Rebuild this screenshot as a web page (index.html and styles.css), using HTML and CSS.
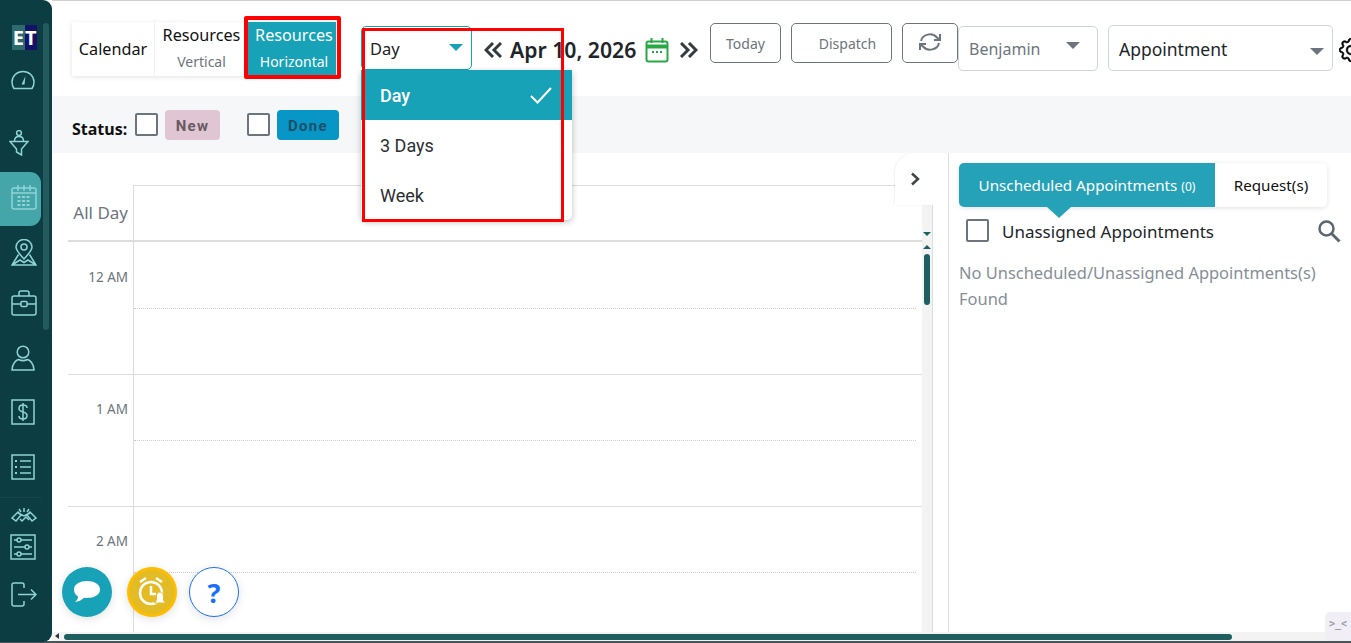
FILE: index.html
```html
<!DOCTYPE html>
<html lang="en">
<head>
<meta charset="utf-8">
<title>Calendar</title>
<link rel="stylesheet" href="styles.css">
</head>
<body>
<div class="app">
  <aside class="sidebar">
    <div class="logo"><span class="logo-e">E</span><span class="logo-t">T</span></div>
    <a class="nav n-gauge"><svg width="24" height="20" viewBox="0 0 24 20"><path d="M3 18.500h18c1.500-2 2-4 2-6.500C23 6 18 1.500 12 1.500S1 6 1 12c0 2.500.5 4.500 2 6.500z"/><path class="fill" d="M14.500 6l-1 8.500h-3z"/></svg></a>
    <a class="nav n-funnel"><svg width="20" height="26" viewBox="0 0 20 26"><circle cx="10" cy="3" r="2.400"/><path d="M5.500 11c0-3 2-4.500 4.500-4.500s4.500 1.500 4.500 4.500M1 11.500h18l-6.500 7.500v6l-5-3v-3z"/></svg></a>
    <a class="nav n-cal active"><svg width="26" height="26" viewBox="0 0 26 26"><rect x="1" y="4" width="24" height="21" rx="2"/><path d="M1 9h24M7 1v6M13 1v6M19 1v6"/><path class="dash" d="M6.500 13h13M6.500 17h13M6.500 21h13"/></svg></a>
    <a class="nav n-pin"><svg width="26" height="27" viewBox="0 0 26 27"><path d="M13 20C9 15.500 5 11.500 5 8a8 7.500 0 0 1 16 0c0 3.500-4 7.500-8 12z"/><circle cx="13" cy="8" r="3"/><path d="M7.500 15.500L1 26h24l-6.500-10.500M1 26l8-5 4 2.500 4-2.500 8 5"/></svg></a>
    <a class="nav n-case"><svg width="26" height="26" viewBox="0 0 26 26"><rect x="1" y="6" width="24" height="19" rx="2"/><path d="M8 6V3c0-1 1-2 2-2h6c1 0 2 1 2 2v3M1 14h9M16 14h9"/><rect x="10" y="11.500" width="6" height="5" rx="1"/></svg></a>
    <a class="nav n-person"><svg width="24" height="26" viewBox="0 0 24 26"><circle cx="12" cy="7" r="5.800"/><path d="M1 25c0-6 4-10 6.500-10.500 3 1.500 6 1.500 9 0C19 15 23 19 23 25z"/></svg></a>
    <a class="nav n-dollar"><svg width="24" height="26" viewBox="0 0 24 26"><rect x="1" y="1" width="22" height="24"/><path d="M16 9c0-2-2-3-4-3S8 7 8 9.500s2 3 4 3.500 4 1 4 3.500S14 20 12 20s-4-1-4-3M12 4v18"/></svg></a>
    <a class="nav n-list"><svg width="24" height="26" viewBox="0 0 24 26"><rect x="1" y="1" width="22" height="24"/><path d="M9 7h11M9 13h11M9 19h11"/><path class="dash" d="M4 7h2M4 13h2M4 19h2"/></svg></a>
    <a class="nav n-shake"><svg width="26" height="16" viewBox="0 0 26 16"><path d="M13 1v4M8 2l2 3M18 2l-2 3M1 11l6-6 3 3-5 6zM25 11l-6-6-3 3 5 6zM7 6l6 3 6-3M9 12l2 2 4-4 3 3"/></svg></a>
    <a class="nav n-slide"><svg width="26" height="26" viewBox="0 0 26 26"><rect x="1" y="1" width="24" height="24"/><path d="M4 6h3M11 6h11M4 13h11M19 13h3M4 20h3M11 20h11"/><circle cx="9" cy="6" r="2"/><circle cx="17" cy="13" r="2"/><circle cx="9" cy="20" r="2"/></svg></a>
    <a class="nav n-out"><svg width="26" height="25" viewBox="0 0 26 25"><path d="M13 6V3c0-1-1-2-2-2H3C2 1 1 2 1 3v19c0 1 1 2 2 2h8c1 0 2-1 2-2v-3M7 12.500h18M20 7.500l5 5-5 5"/></svg></a>
    <div class="side-scroll"></div>
  </aside>

  <main class="main">
    <header class="toolbar">
      <div class="view-tabs">
        <div class="vtab vtab-cal">Calendar</div>
        <div class="vtab vtab-v">Resources<small>Vertical</small></div>
        <div class="vtab vtab-h">Resources<small>Horizontal</small></div>
      </div>
      <div class="select-day">Day<i class="caret teal"></i></div>
      <div class="date-nav">
        <svg class="dbl" width="18" height="16" viewBox="0 0 18 16"><path d="M9 1L2 8l7 7M17 1l-7 7 7 7"/></svg>
        <span class="date-text">Apr 10, 2026</span>
        <svg class="cal-green" width="24" height="26" viewBox="0 0 24 26"><rect x="1.500" y="4.500" width="21" height="20" rx="2"/><path d="M1.500 9.500h21" stroke-width="4"/><path d="M6.500 1v5M17.500 1v5"/><path d="M7 15h2M11 15h2M15 15h2" stroke-width="2"/></svg>
        <svg class="dbl" width="18" height="16" viewBox="0 0 18 16"><path d="M1 1l7 7-7 7M9 1l7 7-7 7"/></svg>
      </div>
      <button class="btn btn-today">Today</button>
      <button class="btn btn-dispatch">Dispatch</button>
      <button class="btn btn-refresh"><svg width="24" height="20" viewBox="0 0 24 20"><path d="M3 9a9 8 0 0 1 16-3.500L22 8M21 11a9 8 0 0 1-16 3.500L2 12M22 2v6h-6M2 18v-6h6"/></svg></button>
      <div class="sel sel-ben">Benjamin<i class="caret grey"></i></div>
      <div class="sel sel-app">Appointment<i class="caret grey"></i></div>
      <svg class="gear" width="24" height="24" viewBox="0 0 16 16"><path d="M8 4.754a3.246 3.246 0 1 0 0 6.492 3.246 3.246 0 0 0 0-6.492zM5.754 8a2.246 2.246 0 1 1 4.492 0 2.246 2.246 0 0 1-4.492 0z"/><path d="M9.796 1.343c-.527-1.790-3.065-1.790-3.592 0l-.094.319a.873.873 0 0 1-1.255.520l-.292-.160c-1.640-.892-3.433.902-2.540 2.541l.159.292a.873.873 0 0 1-.520 1.255l-.319.094c-1.790.527-1.790 3.065 0 3.592l.319.094a.873.873 0 0 1 .520 1.255l-.160.292c-.892 1.640.901 3.434 2.541 2.540l.292-.159a.873.873 0 0 1 1.255.520l.094.319c.527 1.790 3.065 1.790 3.592 0l.094-.319a.873.873 0 0 1 1.255-.520l.292.160c1.640.893 3.434-.902 2.540-2.541l-.159-.292a.873.873 0 0 1 .520-1.255l.319-.094c1.790-.527 1.790-3.065 0-3.592l-.319-.094a.873.873 0 0 1-.520-1.255l.160-.292c.893-1.640-.902-3.433-2.541-2.540l-.292.159a.873.873 0 0 1-1.255-.520l-.094-.319zm-2.633.283c.246-.835 1.428-.835 1.674 0l.094.319a1.873 1.873 0 0 0 2.693 1.115l.291-.160c.764-.415 1.600.420 1.184 1.185l-.159.292a1.873 1.873 0 0 0 1.116 2.692l.318.094c.835.246.835 1.428 0 1.674l-.319.094a1.873 1.873 0 0 0-1.115 2.693l.160.291c.415.764-.420 1.600-1.185 1.184l-.291-.159a1.873 1.873 0 0 0-2.693 1.116l-.094.318c-.246.835-1.428.835-1.674 0l-.094-.319a1.873 1.873 0 0 0-2.692-1.115l-.292.160c-.764.415-1.600-.420-1.184-1.185l.159-.291A1.873 1.873 0 0 0 1.945 8.930l-.319-.094c-.835-.246-.835-1.428 0-1.674l.319-.094A1.873 1.873 0 0 0 3.060 4.377l-.160-.292c-.415-.764.420-1.600 1.185-1.184l.292.159a1.873 1.873 0 0 0 2.692-1.115l.094-.319z"/></svg>
    </header>

    <section class="status">
      <span class="status-label">Status:</span>
      <span class="check"></span>
      <span class="chip chip-new">New</span>
      <span class="check check-2"></span>
      <span class="chip chip-done">Done</span>
    </section>

    <section class="body">
      <div class="cal-pane">
        <div class="cal-grid">
          <div class="allday"><div class="label-allday">All Day</div><div class="allday-cell"></div></div>
          <div class="hour"><div class="hlabel">12 AM</div><div class="hcell"></div></div>
          <div class="hour"><div class="hlabel">1 AM</div><div class="hcell"></div></div>
          <div class="hour"><div class="hlabel">2 AM</div><div class="hcell"></div></div>
          <div class="hour"><div class="hlabel"></div><div class="hcell"></div></div>
        </div>
        <div class="vscroll"><i class="arr-d"></i><i class="arr-u"></i><div class="vthumb"></div></div>
        <div class="collapse"><svg width="10" height="14" viewBox="0 0 10 14"><path d="M2 1.500L8 7l-6 5.500"/></svg></div>
      </div>
      <div class="panel">
        <div class="panel-tabs">
          <div class="ptab ptab-on">Unscheduled Appointments <small>(0)</small></div>
          <div class="ptab ptab-off">Request(s)</div>
        </div>
        <div class="un-row">
          <span class="check check-3"></span>
          <span class="un-label">Unassigned Appointments</span>
          <svg class="search" width="24" height="24" viewBox="0 0 24 24"><circle cx="9.500" cy="9.500" r="7"/><path d="M14.500 14.500L22.500 22.500" stroke-width="3"/></svg>
        </div>
        <p class="empty">No Unscheduled/Unassigned Appointments(s) Found</p>
      </div>
    </section>

    <div class="hscroll"><i class="arr-l"></i><div class="hthumb"></div></div>
  </main>
</div>

<ul class="menu">
  <li class="menu-on">Day<svg width="24" height="18" viewBox="0 0 24 18"><path d="M2 10l6.500 6.500L22 2"/></svg></li>
  <li>3 Days</li>
  <li>Week</li>
</ul>
<div class="mark mark-tab"></div>
<div class="mark mark-menu"></div>

<div class="fab fab-chat"><svg width="28" height="24" viewBox="0 0 28 24"><path d="M14 1c7 0 13 3 13 8.500S21 18 14 18c-1 0-2 0-3-.2C9 20 5 22 2 22c2-1.500 3-3.500 3-5.500C2.500 15 1 12.500 1 9.500 1 4 7 1 14 1z"/></svg></div>
<div class="fab fab-alarm"><svg width="32" height="34" viewBox="0 0 32 34"><circle cx="15" cy="18" r="11"/><path d="M4 7l6-4M26 7l-6-4M15 11v8h5"/><path class="bell" d="M24 17c2 0 3.500 1.500 3.500 4v4l2 3H18.500l2-3v-4c0-2.500 1.500-4 3.500-4z"/></svg></div>
<div class="fab fab-help">?</div>
<div class="bot">&gt;_&lt;</div>
</body>
</html>
```
FILE: styles.css
```css
* { box-sizing: border-box; }
html, body { margin: 0; height: 100%; overflow: hidden; background: #fff; }
body { font-family: "Noto Sans", "Open Sans", sans-serif; color: #212529; }
.app { display: flex; height: 643px; border-bottom: 2px solid #4a5557; }

/* sidebar */
.sidebar { width: 52px; flex: none; background: #0b3d42; border-radius: 0 9px 9px 0; position: relative; padding-top: 25px; height: 642px; }
.logo { display: flex; width: 25px; height: 25px; margin-left: 12px; font: 700 20px/25px "Noto Sans", sans-serif; color: #fff; text-align: center; }
.logo-e { flex: 1; background: #2c6a6d; }
.logo-t { flex: 1; background: #15126a; }
.nav { display: flex; align-items: center; padding-left: 11px; height: 54px; }
.nav svg { fill: none; stroke: #8fd3d6; stroke-width: 1.500; display: block; }
.nav svg .fill { fill: #8fd3d6; stroke: none; }
.nav svg .dash { stroke-dasharray: 3 1.500; stroke-width: 2; }
.n-gauge { height: 60px; }
.n-funnel { height: 54px; margin-top: 6px; padding-left: 9px; }
.n-cal { height: 54px; margin-top: 2px; width: 41px; padding-bottom: 4px; }
.active { background: #45a6a9; border-radius: 0 11px 11px 0; }
.n-pin { height: 52px; }
.n-case { height: 50px; }
.n-person { height: 60px; }
.n-dollar { height: 48px; }
.n-list { height: 62px; border-bottom: 1px solid #15474c; width: 41px; }
.n-shake { height: 34px; }
.n-slide { height: 30px; padding-left: 10px; }
.n-out { height: 48px; margin-top: 8px; }
.side-scroll { position: absolute; left: 43px; top: 23px; width: 6px; height: 307px; background: #235a5e; border-radius: 3px; }

/* main */
.main { flex: 1; min-width: 0; display: flex; flex-direction: column; height: 641px; }
.toolbar { height: 96px; flex: none; border-top: 1px solid #cfcfcf; display: flex; align-items: flex-start; padding-left: 20px; overflow: hidden; }
.toolbar > * { flex: none; }

.view-tabs { display: flex; margin-top: 21px; height: 54px; box-shadow: 0 1px 5px rgba(0,0,0,.12); }
.vtab { font-size: 16.200px; line-height: 22px; text-align: center; color: #111; background: #fff; white-space: nowrap; }
.vtab small { display: block; font-size: 14px; line-height: 20px; margin-top: 6px; color: #6c757d; }
.vtab-cal { width: 83px; line-height: 54px; border-right: 1px solid #f1f1f1; }
.vtab-v { width: 93px; padding-top: 2px; }
.vtab-h { width: 88px; padding: 2px 0 0 4px; background: #17a2b8; color: #fff; }
.vtab-h small { color: #fff; }

.select-day { width: 111px; height: 44px; margin: 25px 0 0 25px; border: 1px solid #17a2b8; border-radius: 5px; font-size: 16.500px; line-height: 44px; padding-left: 8px; position: relative; color: #222; }
.caret { position: absolute; width: 0; height: 0; border-left: 7px solid transparent; border-right: 7px solid transparent; }
.caret.teal { border-top: 7px solid #17a2b8; right: 8px; top: 17px; }
.caret.grey { border-top: 7px solid #6c757d; }

.date-nav { display: flex; align-items: center; margin: 32px 0 0 12px; height: 34px; }
.date-nav svg { flex: none; }
.dbl { fill: none; stroke: #343a40; stroke-width: 3; }
.date-text { font-size: 21.200px; font-weight: 600; line-height: 34px; color: #212529; margin-left: 8px; white-space: nowrap; width: 126px; }
.cal-green { fill: none; stroke: #28a745; stroke-width: 2; margin-left: 9px; margin-right: 11px; }

.btn { height: 40px; margin-top: 22px; background: #fff; border: 1px solid #6c757d; border-radius: 5px; font: 14px "Noto Sans", sans-serif; color: #6c757d; padding: 0; }
.btn-today { width: 71px; margin-left: 12px; }
.btn-dispatch { width: 101px; margin-left: 10px; padding-left: 12px; }
.btn-refresh { width: 56px; margin-left: 10px; display: flex; align-items: flex-start; justify-content: center; padding-top: 8px; }
.btn-refresh svg { fill: none; stroke: #6c757d; stroke-width: 2; }

.sel { position: relative; border: 1px solid #ced4da; border-radius: 5px; background: #fff; }
.sel-ben { width: 140px; height: 45px; margin-top: 25px; font-size: 16px; line-height: 44px; padding-left: 10px; color: #6c757d; }
.sel-ben .caret { right: 17px; top: 15px; }
.sel-app { width: 225px; height: 46px; margin: 24px 0 0 10px; font-size: 17.500px; line-height: 47px; padding-left: 10px; color: #212529; }
.sel-app .caret { right: 8px; top: 22px; }
.gear { margin: 37px 0 0 6px; fill: #000; stroke: #000; stroke-width: .4; }

/* status */
.status { height: 57px; flex: none; background: #f6f7f9; display: flex; align-items: center; padding-left: 20px; }
.status-label { font-weight: 700; font-size: 16px; color: #111; margin-top: 8px; width: 63px; }
.check { width: 23px; height: 23px; border: 2px solid #6c757d; border-radius: 2px; background: #fff; flex: none; display: block; }
.check-2 { margin-left: 27px; }
.chip { font-family: "Roboto", sans-serif; font-size: 15px; font-weight: 700; letter-spacing: 1.300px; border-radius: 4px; height: 30px; line-height: 32px; text-align: center; }
.chip-new { width: 55px; margin-left: 7px; background: #e0c6d2; color: #695a63; }
.chip-done { width: 62px; margin-left: 7px; background: #0796c6; color: #1e5069; }

/* body */
.body { flex: 1; display: flex; min-height: 0; }
.cal-pane { width: 897px; flex: none; display: flex; padding: 32px 0 0 16px; position: relative; overflow: hidden; border-right: 1px solid #ddd; }
.cal-grid { width: 854px; flex: none; }
.allday { display: flex; height: 57px; border-bottom: 2px solid #ddd; }
.label-allday { width: 65px; font-size: 17px; color: #6c757d; line-height: 56px; text-align: right; padding-right: 5px; white-space: nowrap; }
.allday-cell { flex: 1; border-left: 1px solid #ddd; border-top: 1px solid #ddd; margin-right: 6px; }
.hour { display: flex; height: 132px; border-bottom: 1px solid #ddd; }
.allday + .hour { height: 133px; }
.hlabel { width: 65px; font-size: 13.500px; color: #6c757d; text-align: right; padding: 24px 5px 0 0; line-height: 20px; white-space: nowrap; }
.allday + .hour .hlabel { padding-top: 25px; }
.hcell { flex: 1; border-left: 1px solid #ddd; margin-right: 6px; position: relative; }
.hcell::after { content: ""; position: absolute; left: 0; right: 0; top: 65px; border-top: 1px dotted #ccc; }
.allday + .hour .hcell::after { top: 66px; }
.vscroll { width: 11px; flex: none; margin-top: 18px; background: #f3f3f3; border-right: 1px solid #ddd; position: relative; }
.vthumb { position: absolute; left: 2px; top: 51px; width: 6px; height: 51px; border-radius: 3px; background: #1f5f60; }
.arr-d, .arr-u { position: absolute; left: 1px; width: 0; height: 0; border-left: 4px solid transparent; border-right: 4px solid transparent; }
.arr-d { top: 29px; border-top: 4px solid #1f5f60; }
.arr-u { top: 42px; border-bottom: 4px solid #1f5f60; }
.collapse { position: absolute; left: 843px; top: 0; width: 40px; height: 52px; background: #fff; border-radius: 20px 0 0 0; box-shadow: -1px 0 2px rgba(0,0,0,.06); padding: 19px 0 0 15px; }
.collapse svg { fill: none; stroke: #3f4448; stroke-width: 2.500; display: block; }

.panel { flex: 1; padding: 10px 0 0 10px; min-width: 0; }
.panel-tabs { display: flex; width: 368px; height: 44px; border-radius: 5px; box-shadow: 0 1px 5px rgba(0,0,0,.12); }
.ptab { line-height: 44px; font-size: 15.200px; text-align: center; }
.ptab small { font-size: 12px; }
.ptab-on { width: 256px; background: #26a2b8; color: #fff; border-radius: 5px 0 0 5px; position: relative; }
.ptab-on::after { content: ""; position: absolute; left: 88px; top: 44px; border-left: 12px solid transparent; border-right: 12px solid transparent; border-top: 11px solid #26a2b8; }
.ptab-off { flex: 1; color: #111; }
.un-row { display: flex; align-items: center; padding-left: 7px; height: 23px; margin-top: 12px; position: relative; }
.un-label { font-size: 17px; color: #212529; margin: 2px 0 0 13px; white-space: nowrap; }
.search { position: absolute; left: 358px; top: 0; fill: none; stroke: #5d6670; stroke-width: 2.500; }
.empty { margin: 18px 0 0; font-size: 16.450px; line-height: 26px; color: #868e96; width: 370px; }

.hscroll { height: 9px; flex: none; background: #f3f3f3; position: relative; }
.hthumb { position: absolute; left: 12px; top: 2px; width: 1168px; height: 6px; border-radius: 3px; background: #1f5f60; }
.arr-l { position: absolute; left: 3px; top: 1px; width: 0; height: 0; border-top: 3px solid transparent; border-bottom: 3px solid transparent; border-right: 4px solid #333; }

/* overlays */
.menu { position: absolute; left: 361px; top: 70px; width: 211px; margin: 0; padding: 0; list-style: none; background: #fff; border-radius: 0 0 5px 5px; box-shadow: 0 2px 6px rgba(0,0,0,.25); font: 18px/52px "Roboto", sans-serif; color: #2b2f33; }
.menu li { height: 50px; padding-left: 19px; position: relative; }
.menu-on { background: #17a2b8; color: #fff; font-weight: 500; }
.menu-on svg { position: absolute; left: 168px; top: 16px; fill: none; stroke: #fff; stroke-width: 2; }
.mark { position: absolute; border: 3px solid #f00; pointer-events: none; }
.mark-tab { left: 244px; top: 16px; width: 97px; height: 63px; border-width: 4px; border-radius: 2px; }
.mark-menu { left: 362px; top: 28px; width: 202px; height: 194px; }

.fab { position: absolute; top: 567px; width: 50px; height: 50px; border-radius: 50%; display: flex; align-items: center; justify-content: center; box-shadow: 0 2px 10px rgba(0,0,0,.12); }
.fab-chat { left: 62px; background: #17a2b8; }
.fab-chat svg { fill: #fff; }
.fab-alarm { left: 127px; background: #e2bb25; border: 3px solid #fdbd00; }
.fab-alarm svg { fill: none; stroke: #fff; stroke-width: 2.500; }
.fab-alarm .bell { fill: #fff; stroke: #e2bb25; stroke-width: 1; }
.fab-help { left: 189px; background: #fff; border: 1px solid #1a6ffd; color: #1a6ffd; font-size: 27px; font-weight: 700; }
.bot { position: absolute; left: 1325px; top: 612px; width: 26px; height: 29px; background: #f1eef6; border-radius: 5px 0 0 5px; color: #9aa0a6; font: 700 10px/24px "DejaVu Sans Mono", monospace; text-align: center; overflow: hidden; }
```
